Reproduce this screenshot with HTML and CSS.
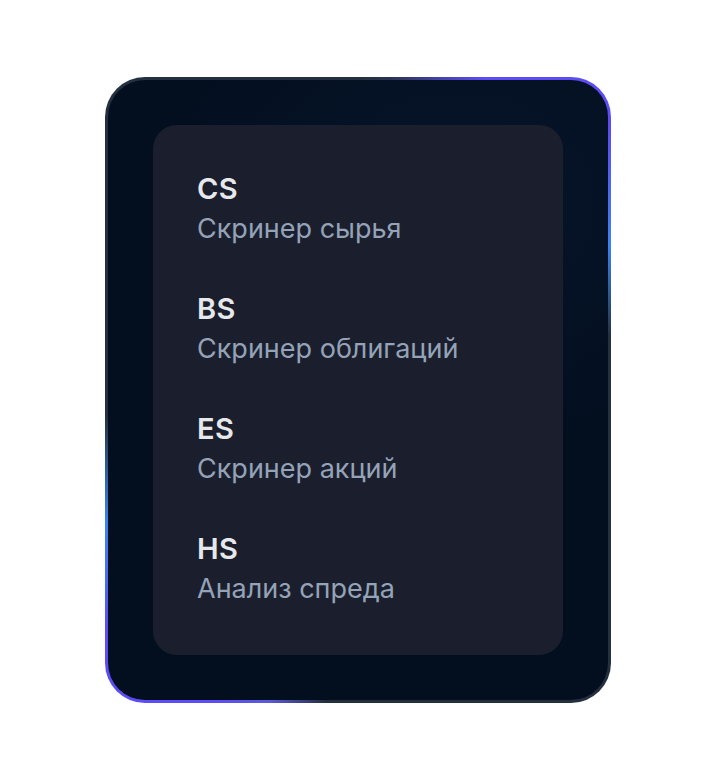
FILE: index.html
```html
<!DOCTYPE html>
<html lang="ru">
<head>
<meta charset="utf-8">
<title>Screeners</title>
<link rel="stylesheet" href="styles.css">
</head>
<body>
<div class="stage">
  <div class="card">
    <div class="panel">
      <div class="item">
        <div class="code">CS</div>
        <div class="name">Скринер сырья</div>
      </div>
      <div class="item">
        <div class="code">BS</div>
        <div class="name">Скринер облигаций</div>
      </div>
      <div class="item">
        <div class="code">ES</div>
        <div class="name">Скринер акций</div>
      </div>
      <div class="item">
        <div class="code">HS</div>
        <div class="name">Анализ спреда</div>
      </div>
    </div>
  </div>
</div>
</body>
</html>
```

FILE: styles.css
```css
html, body {
  margin: 0;
  padding: 0;
  background: #ffffff;
}
body {
  font-family: Inter, "Noto Sans", "DejaVu Sans", sans-serif;
}
.stage {
  width: 716px;
  height: 780px;
  display: flex;
  align-items: center;
  justify-content: center;
}
.card {
  width: 506px;
  height: 626px;
  box-sizing: border-box;
  border: 3px solid transparent;
  border-radius: 40px;
  padding: 45px;
  background:
    radial-gradient(ellipse 60% 40% at 70% 20%, rgba(20, 40, 80, 0.25), rgba(0,0,0,0)) padding-box,
    linear-gradient(#030f1f, #030f1f) padding-box,
    conic-gradient(from 0deg,
      #243040 0deg,
      #2a3450 6deg,
      #5b4cf5 22deg,
      #5b4cf5 44deg,
      #4a6af3 52deg,
      #3b82f6 60deg,
      #2f5f9a 68deg,
      #243040 78deg,
      #243040 186deg,
      #5a5ad8 196deg,
      #5b4cf5 205deg,
      #5b4cf5 226deg,
      #4a6af3 233deg,
      #3b82f6 242deg,
      #2f5f9a 252deg,
      #243040 264deg,
      #243040 360deg) border-box;
  display: flex;
}
.panel {
  flex: 1;
  background: #1b1f2d;
  border-radius: 24px;
  padding: 48px 44px;
  display: flex;
  flex-direction: column;
  gap: 48px;
}
.item {
  display: flex;
  flex-direction: column;
  gap: 8px;
}
.code {
  font-size: 29px;
  line-height: 32px;
  font-weight: 600;
  letter-spacing: 0.4px;
  color: #e6e8ec;
}
.name {
  font-size: 27px;
  line-height: 32px;
  font-weight: 400;
  color: #94a3b8;
}
```
